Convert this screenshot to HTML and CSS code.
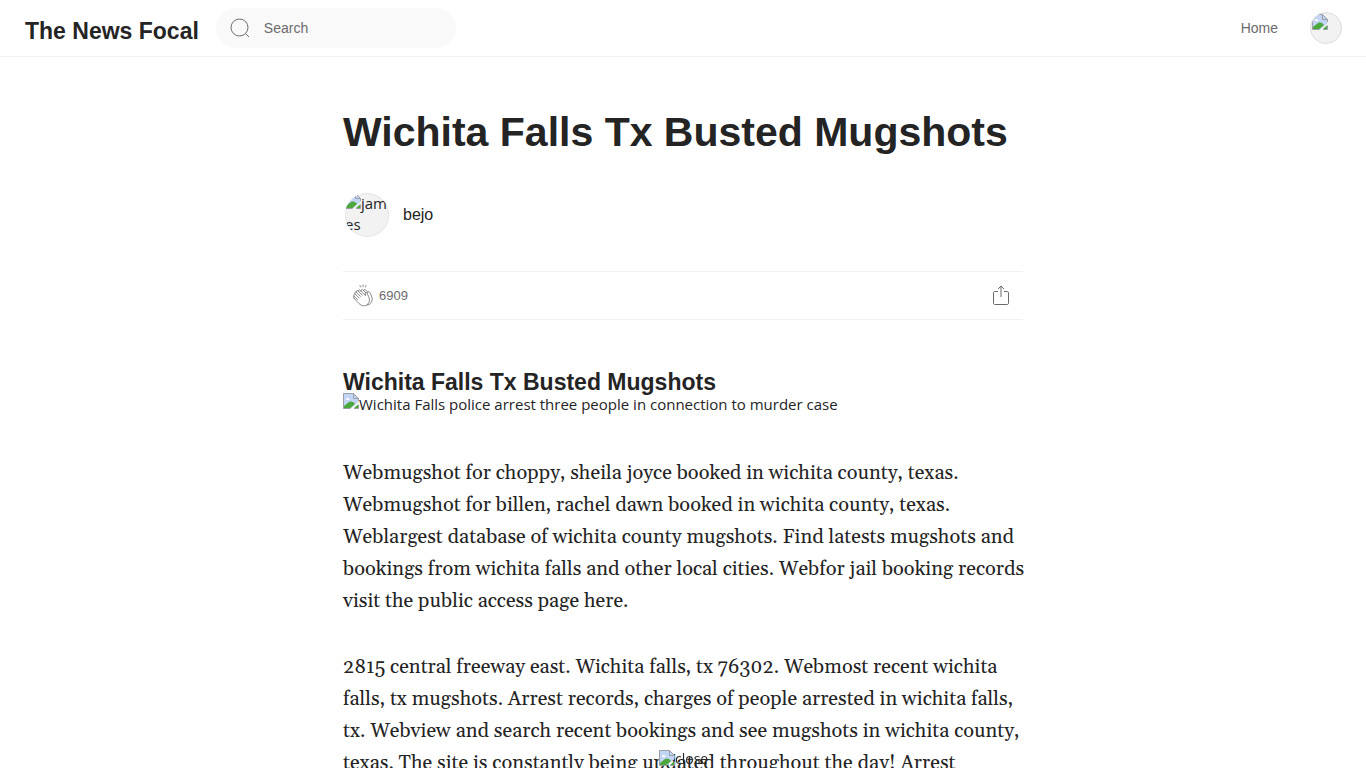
FILE: index.html
```
<!DOCTYPE html>
<html lang="en">
<head>
  <meta charset="UTF-8">
  <meta name="viewport" content="width=device-width, initial-scale=1.0">
  <title>Wichita Falls Tx Busted Mugshots</title>
  <link rel="stylesheet" href="styles.css">
</head>

<body>
  <!-- Shared placeholder for missing images -->
  <svg class="defs" width="0" height="0" aria-hidden="true">
    <symbol id="missing" viewBox="0 0 16 16">
      <path d="M.5 .5H10.500L15.500 5.500V9L8 15.500H.5z" fill="#c3d5f5"/>
      <path d="M3 6.500C3 5 5 4.500 5.500 5.500C7 5.500 7 7 6 7H3z" fill="#fff"/>
      <path d="M1 15V13L6 9C8 8 10 8.500 12 11L7.500 15z" fill="#4ca83d"/>
      <path d="M11 15L15 11.500V15z" fill="#4ca83d"/>
      <path d="M.5 15.500V.5H10.500L15.500 5.500V8M.5 15.500H7.500M10.500 .5V5.500H15.500M11 15.500H15.500V11.500" fill="none" stroke="#9a9ea6"/>
    </symbol>
  </svg>

  <header class="navbar">
    <a class="logo" href="#">The News Focal</a>
    <form class="search" role="search">
      <svg width="24" height="24" viewBox="0 0 24 24" fill="none" stroke="#6b6b6b" aria-hidden="true">
        <circle cx="11.500" cy="11.500" r="8.500"/>
        <path d="M17.500 17.500L21 21"/>
      </svg>
      <input type="search" name="q" placeholder="Search" aria-label="Search">
    </form>
    <nav class="menu">
      <a href="#">Home</a>
      <a class="profile" href="#" aria-label="Profile"><svg width="16" height="16"><use href="#missing"/></svg></a>
    </nav>
  </header>

  <main class="article">
    <h1>Wichita Falls Tx Busted Mugshots</h1>

    <div class="author">
      <div class="avatar"><svg width="16" height="16" aria-hidden="true"><use href="#missing"/></svg>james</div>
      <a href="#">bejo</a>
    </div>

    <div class="actions">
      <button type="button" class="clap">
        <svg width="24" height="24" viewBox="0 0 24 24" fill="none" stroke="#6b6b6b" stroke-width=".8" stroke-linecap="round" stroke-linejoin="round" aria-hidden="true">
          <path d="M9 1.500L9.500 3M12 1V2.800M15 1.500L14.500 3"/>
          <path d="M3.200 14.500L8 19.500C10.700 22.300 14.500 22.600 17 19.900C19 17.600 18.700 15 17.600 12.500L16 9C15.500 7.800 13.900 8.200 14.200 9.600L14.600 11.700L9 6.200C8 5.300 6.700 6.400 7.600 7.500L11.200 11.200"/>
          <path d="M7.600 7.500L7 6.900C5.900 6 4.600 7.200 5.500 8.300L9.500 12.400M5.500 8.300C4.400 7.600 3.100 8.800 4.100 9.900L8.100 14M4.100 10.300C2.800 10 2.100 11.300 3.100 12.200L6.600 15.800M3.100 12.200C2 12.400 2 13.500 3.200 14.500"/>
          <path d="M10 7.100C9.700 5.700 11.100 5.100 12 6L14.800 8.700M16.500 8.600C16.700 7.200 18.300 7.300 18.900 8.500L20.500 12C21.700 14.800 21.400 17.300 19.500 19.400C18.700 20.300 17.700 21 16.600 21.200"/>
          <path d="M12.500 6.400C12.800 5.200 14.100 5.400 14.800 6.100L16.500 7.800"/>
        </svg>
        <span>6909</span>
      </button>
      <button type="button" class="share" aria-label="Share">
        <svg width="24" height="24" viewBox="0 0 24 24" fill="none" stroke="#6b6b6b" aria-hidden="true">
          <path d="M9 7.500H6C5 7.500 4.500 8 4.500 9V19C4.500 20 5 20.500 6 20.500H18C19 20.500 19.500 20 19.500 19V9C19.500 8 19 7.500 18 7.500H15M12 13V2M9 5L12 2L15 5"/>
        </svg>
      </button>
    </div>

    <h2>Wichita Falls Tx Busted Mugshots</h2>
    <div class="photo">
      <svg width="16" height="16" aria-hidden="true"><use href="#missing"/></svg><span>Wichita Falls police arrest three people in connection to murder case</span>
    </div>

    <p>Webmugshot for choppy, sheila joyce booked in wichita county, texas.
      Webmugshot for billen, rachel dawn booked in wichita county, texas.
      Weblargest database of wichita county mugshots. Find latests mugshots and
      bookings from wichita falls and other local cities. Webfor jail booking records
      visit the public access page here.</p>
    <p>2815 central freeway east. Wichita falls, tx 76302. Webmost recent wichita
      falls, tx mugshots. Arrest records, charges of people arrested in wichita falls,
      tx. Webview and search recent bookings and see mugshots in wichita county,
      texas. The site is constantly being updated throughout the day! Arrest</p>
  </main>

  <button type="button" class="close"><svg width="16" height="16" aria-hidden="true"><use href="#missing"/></svg>close</button>
</body>
</html>
```
FILE: styles.css
```
* {
  box-sizing: border-box;
}

body {
  margin: 0;
  background: #fff;
  color: #242424;
  font-family: "Liberation Sans", Arial, sans-serif;
}

a {
  color: inherit;
  text-decoration: none;
}

button {
  display: flex;
  align-items: center;
  padding: 0;
  border: none;
  background: none;
  color: #6b6b6b;
  font-family: inherit;
  cursor: pointer;
}

svg {
  flex-shrink: 0;
}

.defs {
  position: absolute;
}

/* Top bar */
.navbar {
  display: flex;
  align-items: center;
  height: 57px;
  padding: 0 24px;
  border-bottom: 1px solid #f2f2f2;
}

.logo {
  padding: 5px 17px 0 1px;
  font-size: 23px;
  font-weight: bold;
  line-height: 28px;
  white-space: nowrap;
}

.search {
  display: flex;
  align-items: center;
  width: 240px;
  height: 40px;
  padding: 0 12px;
  border-radius: 20px;
  background: #f9f9f9;
}

.search input {
  width: 100%;
  padding: 0 12px;
  border: none;
  outline: none;
  background: transparent;
  font-family: inherit;
  font-size: 14px;
  line-height: 20px;
}

.search input::placeholder {
  color: #6b6b6b;
}

.menu {
  display: flex;
  align-items: center;
  gap: 32px;
  margin-left: auto;
  color: #6b6b6b;
  font-size: 14px;
}

.profile {
  width: 32px;
  height: 32px;
  overflow: hidden;
  border: 1px solid #ddd;
  border-radius: 50%;
  background: #f2f2f2;
}

.profile svg {
  display: block;
  margin: 1px;
}

/* Article */
.article {
  max-width: 680px;
  margin: 0 auto;
}

h1 {
  margin: 49px 0 35px;
  font-size: 41px;
  line-height: 52px;
}

.author {
  display: flex;
  align-items: center;
  gap: 14px;
  padding-left: 2px;
  font-size: 16px;
}

.avatar {
  width: 44px;
  height: 44px;
  overflow: hidden;
  border-radius: 50%;
  background: #f2f2f2;
  box-shadow: inset 0 0 0 1px #e6e6e6;
  font-family: "Open Sans", sans-serif;
  font-size: 15px;
  line-height: 21px;
  word-break: break-all;
}

.actions {
  display: flex;
  align-items: center;
  justify-content: space-between;
  height: 49px;
  margin: 34px 0 49px;
  padding: 0 10px 0 8px;
  border-top: 1px solid #f2f2f2;
  border-bottom: 1px solid #f2f2f2;
}

.clap {
  gap: 4px;
  font-size: 13px;
}

h2 {
  margin: 0;
  font-size: 23px;
  line-height: 26px;
}

.photo {
  display: flex;
  margin: -2px 0 42px;
  font-family: "Open Sans", sans-serif;
  font-size: 15px;
  line-height: 22px;
}

/* text column runs slightly past the article edge */
p {
  margin: 0 -4px 34px 0;
  font-family: Georgia, Gelasio, "Liberation Serif", serif;
  font-size: 20px;
  line-height: 32px;
}

.close {
  position: fixed;
  bottom: 0;
  left: 50%;
  height: 20px;
  margin-left: -24px;
  color: #242424;
  font-family: "Open Sans", sans-serif;
  font-size: 14px;
}
```
